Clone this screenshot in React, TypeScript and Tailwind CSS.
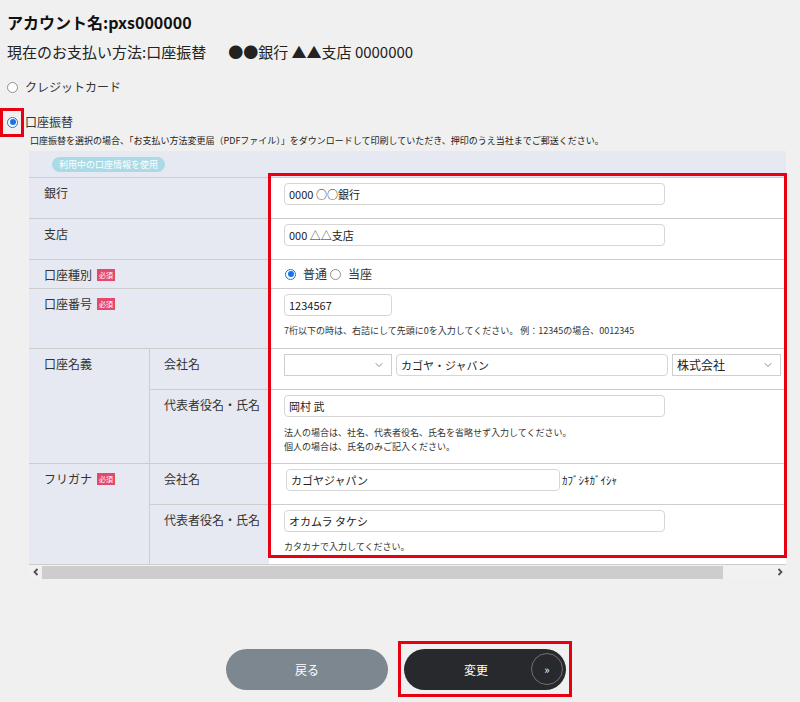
import { ChevronDown } from "lucide-react";

const font = "font-['Noto_Sans_CJK_JP','Noto_Sans',sans-serif]";

function Radio({ checked }: { checked?: boolean }) {
  return (
    <span
      className={`w-[11px] h-[11px] rounded-full border bg-white flex items-center justify-center shrink-0 ${
        checked ? "border-[#1a73e8]" : "border-[#8f8f8f]"
      }`}
    >
      {checked && <span className="w-[6px] h-[6px] rounded-full bg-[#1a73e8]" />}
    </span>
  );
}

function Required() {
  return (
    <span className="ml-[5px] inline-flex items-center justify-center w-[18px] h-[12px] bg-[#e5486f] text-white text-[7px] leading-none">
      必須
    </span>
  );
}

function TextBox({ value, w }: { value: string; w: string }) {
  return (
    <input
      readOnly
      defaultValue={value}
      className={`${w} h-[22px] border border-[#d6d6d6] rounded-[4px] bg-white px-[4px] text-[11px] text-[#222] outline-none`}
    />
  );
}

function SelectBox({ value, w }: { value: string; w: string }) {
  return (
    <div
      className={`${w} h-[22px] border border-[#cfcfcf] bg-white flex items-center justify-between pl-[4px] pr-[6px] text-[12px] text-[#222]`}
    >
      <span>{value}</span>
      <ChevronDown className="w-[12px] h-[12px] text-[#56647e]" strokeWidth={1.5} />
    </div>
  );
}

function Help({ children }: { children: React.ReactNode }) {
  return <div className="text-[9px] leading-[14px] text-[#333]">{children}</div>;
}

function Row({
  label,
  required,
  h,
  children,
}: {
  label: string;
  required?: boolean;
  h: string;
  children: React.ReactNode;
}) {
  return (
    <div className={`flex border-t border-[#cdcdcd] ${h}`}>
      <div className="w-[240px] bg-[#e6e9f1] pl-[15px] pt-[6px] flex items-start">
        <span className="leading-[18px]">{label}</span>
        {required && (
          <span className="h-[18px] flex items-center">
            <Required />
          </span>
        )}
      </div>
      <div className="flex-1 bg-white pl-[15px] pt-[5px]">{children}</div>
    </div>
  );
}

function SubRow({
  label,
  h,
  first,
  children,
}: {
  label: string;
  h: string;
  first?: boolean;
  children: React.ReactNode;
}) {
  return (
    <div className={`flex ${first ? "" : "border-t border-[#cdcdcd]"} ${h}`}>
      <div className="w-[120px] bg-[#e6e9f1] border-l border-[#cdcdcd] pl-[14px] pt-[6px] leading-[18px]">
        {label}
      </div>
      <div className="flex-1 bg-white pl-[15px] pt-[5px]">{children}</div>
    </div>
  );
}

function Group({
  label,
  required,
  children,
}: {
  label: string;
  required?: boolean;
  children: React.ReactNode;
}) {
  return (
    <div className="flex border-t border-[#cdcdcd]">
      <div className="w-[120px] bg-[#e6e9f1] pl-[15px] pt-[6px] flex items-start">
        <span className="leading-[18px]">{label}</span>
        {required && (
          <span className="h-[18px] flex items-center">
            <Required />
          </span>
        )}
      </div>
      <div className="flex-1 flex flex-col">{children}</div>
    </div>
  );
}

export default function App() {
  return (
    <div className={`${font} bg-[#f0f0f0] h-[702px] w-[800px] px-[7px] pt-[10px] text-[#333] text-[12px]`}>
      <h1 className="h-[24px] leading-[24px] text-[16px] font-bold text-[#111]">アカウント名:pxs000000</h1>
      <div className="mt-[6px] h-[24px] leading-[24px] text-[15px] text-[#222] flex">
        <span>現在のお支払い方法:口座振替</span>
        <span className="ml-[22px]">●●銀行 ▲▲支店 0000000</span>
      </div>

      <div className="mt-[11px] h-[24px] flex items-center gap-[7px]">
        <Radio />
        <span>クレジットカード</span>
      </div>

      <div className="mt-[11px] h-[24px] flex items-center gap-[7px] relative">
        <Radio checked />
        <span>口座振替</span>
        <span className="absolute -left-[7px] -top-[2px] w-[24px] h-[29px] border-[3px] border-[#e60012]" />
      </div>
      <div className="ml-[23px] h-[14px] leading-[14px] text-[9px] text-[#222]">
        口座振替を選択の場合、「お支払い方法変更届（PDFファイル）」をダウンロードして印刷していただき、押印のうえ当社までご郵送ください。
      </div>

      <div className="relative ml-[22px] mt-[3px] w-[757px]">
        <div className="h-[26px] bg-[#e6e9f1] flex items-center pl-[23px]">
          <span className="h-[15px] px-[7px] rounded-full bg-[#a9dbe6] text-white text-[9px] leading-[15px]">
            利用中の口座情報を使用
          </span>
        </div>

        <Row label="銀行" h="h-[41px]">
          <TextBox value="0000 ○○銀行" w="w-[381px]" />
        </Row>
        <Row label="支店" h="h-[41px]">
          <TextBox value="000 △△支店" w="w-[381px]" />
        </Row>
        <Row label="口座種別" required h="h-[29px]">
          <div className="h-[18px] flex items-center pl-[1px]">
            <Radio checked />
            <span className="ml-[7px]">普通</span>
            <span className="ml-[3px]">
              <Radio />
            </span>
            <span className="ml-[7px]">当座</span>
          </div>
        </Row>
        <Row label="口座番号" required h="h-[60px]">
          <TextBox value="1234567" w="w-[108px]" />
          <div className="mt-[8px]">
            <Help>7桁以下の時は、右詰にして先頭に0を入力してください。 例：12345の場合、0012345</Help>
          </div>
        </Row>

        <Group label="口座名義">
          <SubRow label="会社名" h="h-[40px]" first>
            <div className="flex gap-[4px]">
              <SelectBox value="" w="w-[108px]" />
              <TextBox value="カゴヤ・ジャバン" w="w-[272px]" />
              <SelectBox value="株式会社" w="w-[109px]" />
            </div>
          </SubRow>
          <SubRow label="代表者役名・氏名" h="h-[74px]">
            <TextBox value="岡村 武" w="w-[381px]" />
            <div className="mt-[9px]">
              <Help>法人の場合は、社名、代表者役名、氏名を省略せず入力してください。</Help>
              <Help>個人の場合は、氏名のみご記入ください。</Help>
            </div>
          </SubRow>
        </Group>

        <Group label="フリガナ" required>
          <SubRow label="会社名" h="h-[40px]" first>
            <div className="flex items-center pl-[2px]">
              <TextBox value="カゴヤジャパン" w="w-[274px]" />
              <span className="ml-[2px] text-[11px] text-[#222]">ｶﾌﾞｼｷｶﾞｲｼｬ</span>
            </div>
          </SubRow>
          <SubRow label="代表者役名・氏名" h="h-[60px]">
            <TextBox value="オカムラ タケシ" w="w-[381px]" />
            <div className="mt-[8px]">
              <Help>カタカナで入力してください。</Help>
            </div>
          </SubRow>
        </Group>
        <div className="border-t border-[#cdcdcd]" />

        {/* scrollbar */}
        <div className="h-[14px] flex items-center bg-[#f1f1f1]">
          <div className="w-[13px] flex justify-center">
            <svg width="6" height="8" viewBox="0 0 6 8">
              <polyline points="4.5,1 1.5,4 4.5,7" fill="none" stroke="#505050" strokeWidth="1.8" />
            </svg>
          </div>
          <div className="w-[681px] h-[13px] bg-[#cdcdcd]" />
          <div className="flex-1 flex justify-end pr-[3px]">
            <svg width="6" height="8" viewBox="0 0 6 8">
              <polyline points="1.5,1 4.5,4 1.5,7" fill="none" stroke="#505050" strokeWidth="1.8" />
            </svg>
          </div>
        </div>

        <div className="absolute left-[239px] top-[22px] w-[519px] h-[385px] border-[3px] border-[#e60012] pointer-events-none" />
      </div>

      <div className="mt-[70px] flex justify-center gap-[16px] pr-[8px]">
        <button className="w-[162px] h-[41px] rounded-full bg-[#7d878f] text-white text-[12px]">戻る</button>
        <div className="relative">
          <button className="relative w-[162px] h-[41px] rounded-full bg-[#28292c] text-white text-[12px] pr-[18px]">
            変更
            <span className="absolute right-[3px] top-[4px] w-[32px] h-[32px] rounded-full border border-[#707070] flex items-center justify-center text-[11px] leading-none">
              »
            </span>
          </button>
          <span className="absolute -left-[6px] -top-[8px] -right-[6px] -bottom-[7px] border-[3px] border-[#e60012] pointer-events-none" />
        </div>
      </div>
    </div>
  );
}
